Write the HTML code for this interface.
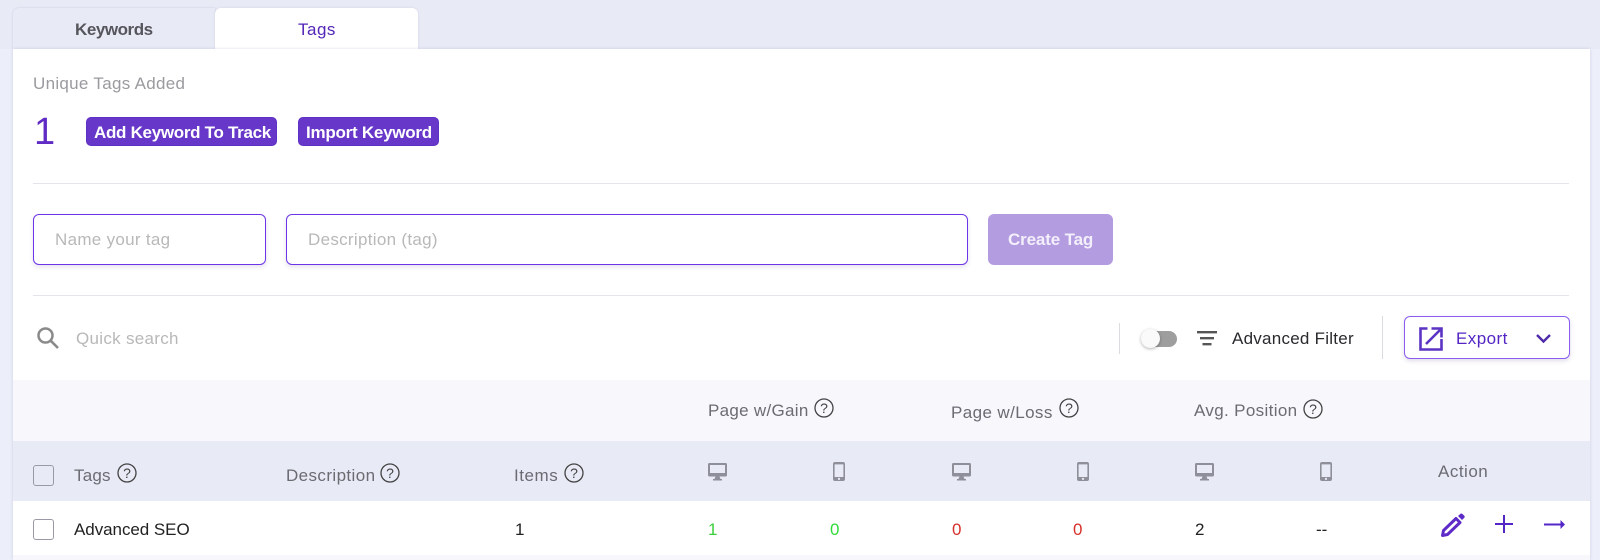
<!DOCTYPE html>
<html>
<head>
<meta charset="utf-8">
<style>
html,body{margin:0;padding:0;width:1600px;height:560px;overflow:hidden;background:#e8eaf6;font-family:"Liberation Sans",sans-serif;}
.a{position:absolute}
.t{position:absolute;white-space:nowrap;line-height:20px;font-size:17px;color:#6b6b72}
svg{position:absolute;overflow:visible}
.q circle{fill:none;stroke:#444;stroke-width:1.3}
.q text{font:normal 14px "Liberation Sans",sans-serif;fill:#444;text-anchor:middle}
.inp{position:absolute;box-sizing:border-box;top:214px;height:51px;border:1px solid #6d35e8;border-radius:6px;background:#fff;box-shadow:0 2px 5px rgba(60,40,120,.14)}
.btn{position:absolute;top:117px;height:29px;background:#6637c8;border:1px solid #5f30c4;box-sizing:border-box;border-radius:5px}
.line{position:absolute;background:#e4e5ec}
</style>
</head>
<body>
<div style="position:relative;width:1600px;height:560px;overflow:hidden">

<div class="a" style="left:0;top:49px;width:1600px;height:511px;background:#eceef9"></div>
<div class="a" style="left:13px;top:8px;width:202px;height:41px;background:#e8eaf6;border-radius:6px 0 0 0;box-shadow:0 0 2px rgba(80,80,120,.18)"></div>
<div class="a" style="left:215px;top:8px;width:203px;height:41px;background:#fff;border-radius:6px 6px 0 0;box-shadow:0 0 2px rgba(80,80,120,.16)"></div>
<div class="t" style="left:75px;top:20px;font-weight:bold;color:#55555c;letter-spacing:-.45px">Keywords</div>
<div class="t" style="left:298px;top:20px;color:#5326b8;letter-spacing:.5px">Tags</div>

<div class="a" style="left:13px;top:49px;width:1577px;height:511px;background:#fff;box-shadow:0 0 3px rgba(90,90,140,.2)"></div>

<div class="t" style="left:33px;top:74px;color:#9a9a9f;letter-spacing:.3px">Unique Tags Added</div>
<div class="t" style="left:34px;top:112px;line-height:40px;font-size:38px;color:#5f2bc4">1</div>

<div class="btn" style="left:86px;width:191px"></div>
<div class="t" style="left:94px;top:123px;font-weight:bold;color:#fff;letter-spacing:-.3px">Add Keyword To Track</div>
<div class="btn" style="left:298px;width:141px"></div>
<div class="t" style="left:306px;top:123px;font-weight:bold;color:#fff;letter-spacing:-.25px">Import Keyword</div>

<div class="line" style="left:33px;top:183px;width:1536px;height:1px"></div>

<div class="inp" style="left:33px;width:233px"></div>
<div class="t" style="left:55px;top:230px;color:#b8b8b8;letter-spacing:.3px">Name your tag</div>
<div class="inp" style="left:286px;width:682px"></div>
<div class="t" style="left:308px;top:230px;color:#b8b8b8;letter-spacing:.3px">Description (tag)</div>
<div class="a" style="left:988px;top:214px;width:125px;height:51px;background:#b39ce0;border-radius:6px"></div>
<div class="t" style="left:1008px;top:230px;font-weight:bold;color:#f3effb;letter-spacing:-.15px">Create Tag</div>

<div class="line" style="left:33px;top:295px;width:1536px;height:1px"></div>

<svg style="left:36px;top:326px" width="24" height="24" viewBox="0 0 24 24"><circle cx="9.500" cy="9.500" r="7" fill="none" stroke="#8a8a8a" stroke-width="2.500"/><path d="M14.800 14.800L22 22" stroke="#8a8a8a" stroke-width="2.600" fill="none"/></svg>
<div class="t" style="left:76px;top:329px;color:#b8b8b8;letter-spacing:.3px">Quick search</div>

<div class="line" style="left:1119px;top:323px;width:1px;height:31px;background:#dcdce0"></div>
<div class="a" style="left:1144px;top:331px;width:33px;height:16px;background:#9e9e9e;border-radius:8px"></div>
<div class="a" style="left:1141px;top:329px;width:19px;height:19px;background:#fafafa;border-radius:50%;box-shadow:0 1px 3px rgba(0,0,0,.3)"></div>
<svg style="left:1197px;top:331px" width="20" height="15" viewBox="0 0 20 15"><path d="M0 1.200H20M3 7.200H17M5.500 13.200H14.500" stroke="#555" stroke-width="2.400" fill="none"/></svg>
<div class="t" style="left:1232px;top:329px;color:#2a2a2e;letter-spacing:.25px">Advanced Filter</div>
<div class="line" style="left:1382px;top:316px;width:1px;height:43px;background:#dcdce0"></div>

<div class="a" style="left:1404px;top:316px;width:166px;height:43px;box-sizing:border-box;border:1px solid #8a5cf0;border-radius:6px;background:#fff;box-shadow:0 2px 5px rgba(60,40,120,.16)"></div>
<svg style="left:1419px;top:327px" width="24" height="24" viewBox="0 0 24 24"><path d="M8.500 1.500H1.500V22.500H22.500V12" fill="none" stroke="#5c33c4" stroke-width="2.600"/><path d="M7 17L21 3M12.500 1.500H22.500V10.500" fill="none" stroke="#5c33c4" stroke-width="2.600"/></svg>
<div class="t" style="left:1456px;top:329px;color:#5326c4;letter-spacing:.45px">Export</div>
<svg style="left:1536px;top:334px" width="15" height="9" viewBox="0 0 15 9"><path d="M1 1L7.500 7.500L14 1" fill="none" stroke="#4e2ba8" stroke-width="2.400"/></svg>

<div class="a" style="left:13px;top:380px;width:1577px;height:61px;background:#f7f7fc"></div>
<div class="a" style="left:13px;top:441px;width:1577px;height:60px;background:#e8eaf6"></div>
<div class="a" style="left:13px;top:555px;width:1577px;height:5px;background:#f7f7fc"></div>

<div class="t" style="left:708px;top:401px;letter-spacing:.3px">Page w/Gain</div>
<svg class="q" style="left:814px;top:398px" width="20" height="20" viewBox="0 0 20 20"><circle cx="10" cy="10" r="9"/><text x="10" y="15">?</text></svg>
<div class="t" style="left:951px;top:403px;letter-spacing:.4px">Page w/Loss</div>
<svg class="q" style="left:1059px;top:398px" width="20" height="20" viewBox="0 0 20 20"><circle cx="10" cy="10" r="9"/><text x="10" y="15">?</text></svg>
<div class="t" style="left:1194px;top:401px;letter-spacing:.35px">Avg. Position</div>
<svg class="q" style="left:1303px;top:399px" width="20" height="20" viewBox="0 0 20 20"><circle cx="10" cy="10" r="9"/><text x="10" y="15">?</text></svg>

<div class="a" style="left:33px;top:465px;width:21px;height:21px;box-sizing:border-box;border:1px solid #9a9aa6;border-radius:3px"></div>
<div class="t" style="left:74px;top:466px;letter-spacing:.2px">Tags</div>
<svg class="q" style="left:117px;top:463px" width="20" height="20" viewBox="0 0 20 20"><circle cx="10" cy="10" r="9"/><text x="10" y="15">?</text></svg>
<div class="t" style="left:286px;top:466px;letter-spacing:.4px">Description</div>
<svg class="q" style="left:380px;top:463px" width="20" height="20" viewBox="0 0 20 20"><circle cx="10" cy="10" r="9"/><text x="10" y="15">?</text></svg>
<div class="t" style="left:514px;top:466px;letter-spacing:.55px">Items</div>
<svg class="q" style="left:564px;top:463px" width="20" height="20" viewBox="0 0 20 20"><circle cx="10" cy="10" r="9"/><text x="10" y="15">?</text></svg>

<svg style="left:708px;top:463px" width="19" height="18" viewBox="0 0 19 18"><path d="M1.500 0H17.500A1.500 1.500 0 0 1 19 1.500V12A1.500 1.500 0 0 1 17.500 13.500H1.500A1.500 1.500 0 0 1 0 12V1.500A1.500 1.500 0 0 1 1.500 0ZM2 2V10H17V2ZM7.500 13.500H11.500L12.500 16H14V17.500H5V16H6.500Z" fill="#8f8f9a" fill-rule="evenodd"/></svg>
<svg style="left:833px;top:462px" width="12" height="19" viewBox="0 0 12 19"><path d="M2 0H10A2 2 0 0 1 12 2V17A2 2 0 0 1 10 19H2A2 2 0 0 1 0 17V2A2 2 0 0 1 2 0ZM1.600 2.400V15H10.400V2.400ZM6 15.800A1.100 1.100 0 1 0 6 18A1.100 1.100 0 1 0 6 15.800Z" fill="#8f8f9a" fill-rule="evenodd"/></svg>
<svg style="left:952px;top:463px" width="19" height="18" viewBox="0 0 19 18"><path d="M1.500 0H17.500A1.500 1.500 0 0 1 19 1.500V12A1.500 1.500 0 0 1 17.500 13.500H1.500A1.500 1.500 0 0 1 0 12V1.500A1.500 1.500 0 0 1 1.500 0ZM2 2V10H17V2ZM7.500 13.500H11.500L12.500 16H14V17.500H5V16H6.500Z" fill="#8f8f9a" fill-rule="evenodd"/></svg>
<svg style="left:1077px;top:462px" width="12" height="19" viewBox="0 0 12 19"><path d="M2 0H10A2 2 0 0 1 12 2V17A2 2 0 0 1 10 19H2A2 2 0 0 1 0 17V2A2 2 0 0 1 2 0ZM1.600 2.400V15H10.400V2.400ZM6 15.800A1.100 1.100 0 1 0 6 18A1.100 1.100 0 1 0 6 15.800Z" fill="#8f8f9a" fill-rule="evenodd"/></svg>
<svg style="left:1195px;top:463px" width="19" height="18" viewBox="0 0 19 18"><path d="M1.500 0H17.500A1.500 1.500 0 0 1 19 1.500V12A1.500 1.500 0 0 1 17.500 13.500H1.500A1.500 1.500 0 0 1 0 12V1.500A1.500 1.500 0 0 1 1.500 0ZM2 2V10H17V2ZM7.500 13.500H11.500L12.500 16H14V17.500H5V16H6.500Z" fill="#8f8f9a" fill-rule="evenodd"/></svg>
<svg style="left:1320px;top:462px" width="12" height="19" viewBox="0 0 12 19"><path d="M2 0H10A2 2 0 0 1 12 2V17A2 2 0 0 1 10 19H2A2 2 0 0 1 0 17V2A2 2 0 0 1 2 0ZM1.600 2.400V15H10.400V2.400ZM6 15.800A1.100 1.100 0 1 0 6 18A1.100 1.100 0 1 0 6 15.800Z" fill="#8f8f9a" fill-rule="evenodd"/></svg>
<div class="t" style="left:1438px;top:462px;letter-spacing:.5px">Action</div>

<div class="a" style="left:33px;top:519px;width:21px;height:21px;box-sizing:border-box;border:1px solid #9a9aa6;border-radius:3px;background:#fff"></div>
<div class="t" style="left:74px;top:520px;color:#222;letter-spacing:-.05px">Advanced SEO</div>
<div class="t" style="left:515px;top:520px;color:#222">1</div>
<div class="t" style="left:708px;top:520px;color:#3ccf3c">1</div>
<div class="t" style="left:830px;top:520px;color:#2fdc3a">0</div>
<div class="t" style="left:952px;top:520px;color:#d8302a">0</div>
<div class="t" style="left:1073px;top:520px;color:#d8302a">0</div>
<div class="t" style="left:1195px;top:520px;color:#222">2</div>
<div class="t" style="left:1316px;top:520px;color:#222">--</div>

<svg style="left:1441px;top:513px" width="24" height="24" viewBox="0 0 24 24"><path d="M1.500 22.500L2.500 17.500L15 5.500L19 9.500L6.500 21.500Z" fill="none" stroke="#5f2bc8" stroke-width="3" stroke-linejoin="round"/><path d="M17 3L19.500 .8Q20.500 0 21.500 1L23.500 3Q24 4 23.300 4.800L21 7Z" fill="#5f2bc8"/></svg>
<svg style="left:1495px;top:515px" width="18" height="18" viewBox="0 0 18 18"><path d="M9 0V18M0 9H18" stroke="#5426c8" stroke-width="2" fill="none"/></svg>
<svg style="left:1544px;top:519px" width="21" height="11" viewBox="0 0 21 11"><path d="M0 5.500H17" stroke="#5426c8" stroke-width="2" fill="none"/><path d="M16.500 1L21 5.500L16.500 10Z" fill="#5426c8"/></svg>

</div>
</body>
</html>
